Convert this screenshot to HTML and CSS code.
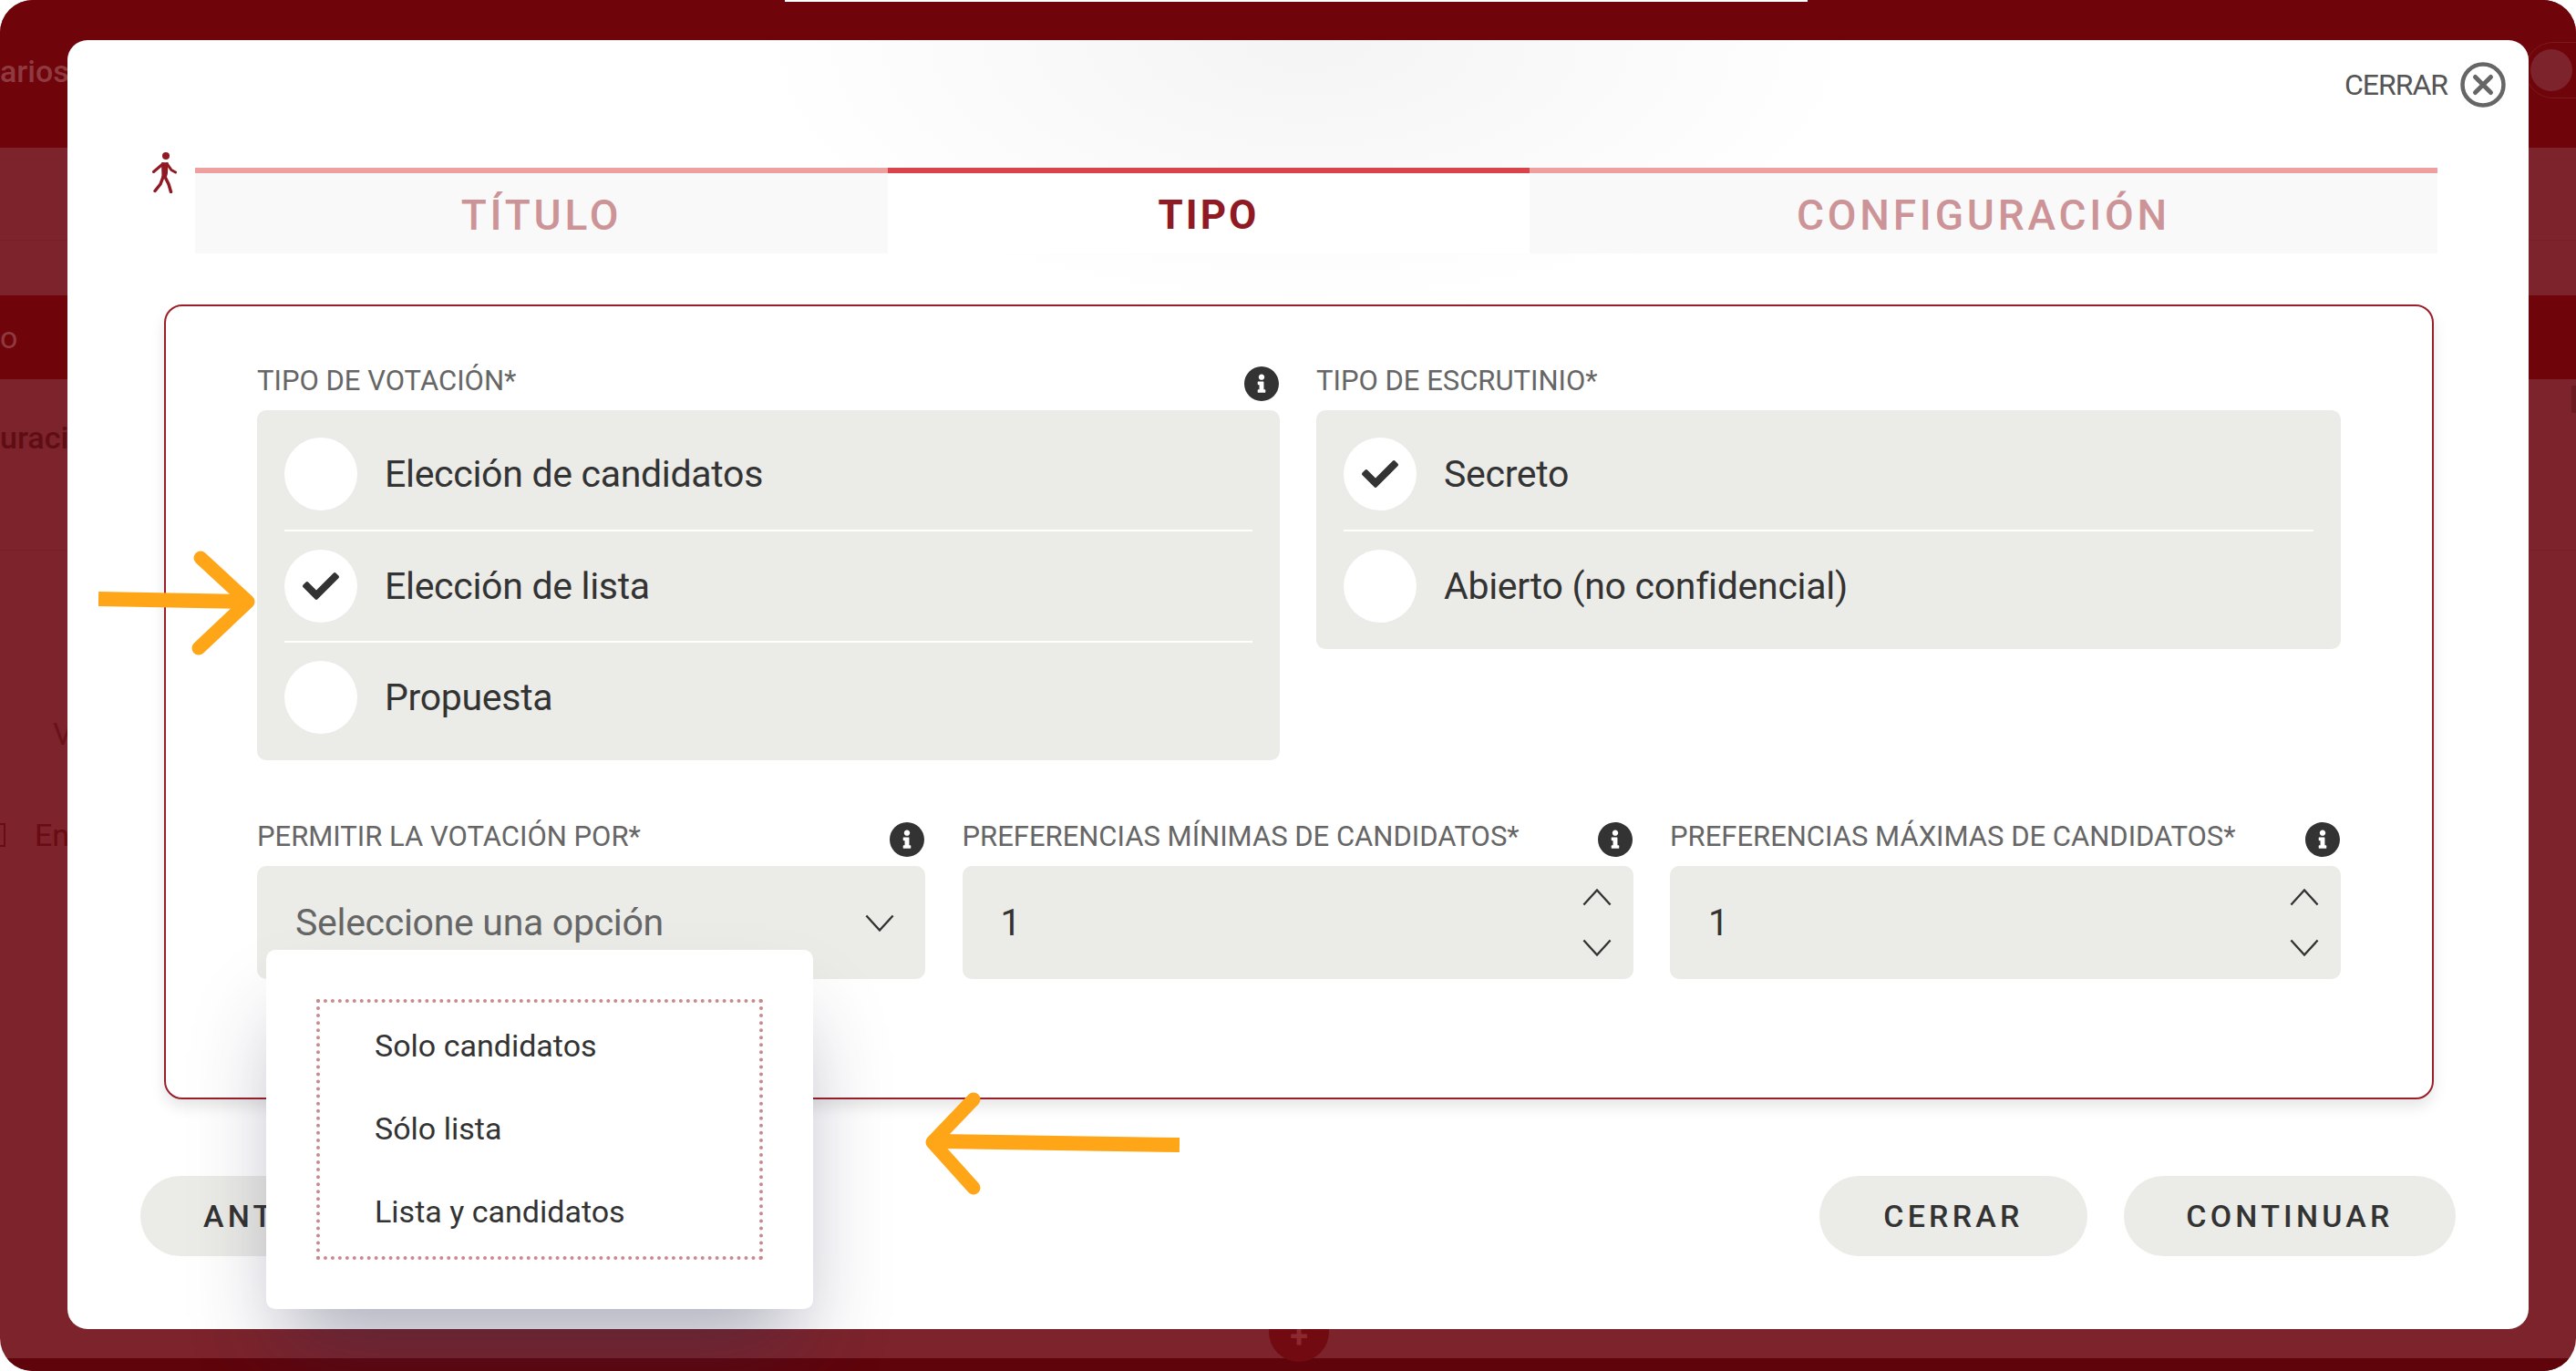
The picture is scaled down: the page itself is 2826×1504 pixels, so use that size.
FILE: index.html
```html
<!DOCTYPE html>
<html lang="es">
<head>
<meta charset="utf-8">
<title>Votación</title>
<link rel="stylesheet" href="styles.css">
</head>
<body>
<div class="screen">
  <div class="backdrop">
    <div class="bd-band bd-head"><span>arios</span></div>
    <div class="bd-band bd-a"></div>
    <div class="bd-band bd-b"></div>
    <div class="bd-band bd-active"><span>o</span></div>
    <div class="bd-band bd-c"><span>uraci</span></div>
    <div class="bd-band bd-d"></div>
    <div class="bd-band bd-e"><span class="bd-v">V</span></div>
    <div class="bd-band bd-f"><span class="bd-icon"></span><span class="bd-en">En</span></div>
    <div class="bd-band bd-g"></div>
    <div class="bd-foot"></div>
  </div>
  <div class="top-sliver"></div>
  <div class="bd-toggle"><span class="bd-knob"></span></div>
  <div class="bd-marker"></div>
  <div class="bd-plus">+</div>

  <section class="modal">
    <header class="close-row">
      <span class="close-text">CERRAR</span>
      <svg class="close-icon" viewBox="0 0 50 50"><circle cx="25" cy="25" r="22.5" fill="none" stroke="#666" stroke-width="4.5"/><path d="M16.5 16.5 33.5 33.5M33.5 16.5 16.5 33.5" fill="none" stroke="#666" stroke-width="5" stroke-linecap="round"/></svg>
    </header>

    <nav class="tabs">
      <svg class="walker" viewBox="0 0 30 46"><circle cx="18" cy="5" r="4" fill="#8f1a24"/><path fill="#8f1a24" d="M13 12.500 20.500 12 20 24 18.500 30 13.500 29Z"/><path d="M15 13.500 4.500 22.500M19.500 14 24 20.500 28.500 23" fill="none" stroke="#8f1a24" stroke-width="3" stroke-linecap="round" stroke-linejoin="round"/><path d="M15 28 12 36 6 43.500M17 28 21 36 23.500 44.500" fill="none" stroke="#8f1a24" stroke-width="3.500" stroke-linecap="round" stroke-linejoin="round"/></svg>
      <div class="tab">TÍTULO</div>
      <div class="tab tab-active">TIPO</div>
      <div class="tab">CONFIGURACIÓN</div>
    </nav>

    <main class="panel">
      <div class="top-grid">
        <div class="field">
          <div class="label-row"><span class="label">TIPO DE VOTACIÓN*</span>
            <svg class="info" viewBox="8 8 496 496"><path d="M256 8C119.043 8 8 119.083 8 256c0 136.997 111.043 248 248 248s248-111.003 248-248C504 119.083 392.957 8 256 8zm0 110c23.196 0 42 18.804 42 42s-18.804 42-42 42-42-18.804-42-42 18.804-42 42-42zm56 254c0 6.627-5.373 12-12 12h-88c-6.627 0-12-5.373-12-12v-24c0-6.627 5.373-12 12-12h12v-64h-12c-6.627 0-12-5.373-12-12v-24c0-6.627 5.373-12 12-12h64c6.627 0 12 5.373 12 12v100h12c6.627 0 12 5.373 12 12v24z"/></svg>
          </div>
          <div class="options">
            <div class="option"><span class="radio"></span><span class="option-text">Elección de candidatos</span></div>
            <div class="option"><span class="radio"><svg class="check" viewBox="0 0 512 512"><path d="M173.898 439.404l-166.4-166.4c-9.997-9.997-9.997-26.206 0-36.204l36.203-36.204c9.997-9.998 26.207-9.998 36.204 0L192 312.690 432.095 72.596c9.997-9.997 26.207-9.997 36.204 0l36.203 36.204c9.997 9.997 9.997 26.206 0 36.204l-294.400 294.401c-9.998 9.997-26.207 9.997-36.204-.001z"/></svg></span><span class="option-text">Elección de lista</span></div>
            <div class="option"><span class="radio"></span><span class="option-text">Propuesta</span></div>
          </div>
        </div>
        <div class="field">
          <div class="label-row"><span class="label">TIPO DE ESCRUTINIO*</span></div>
          <div class="options">
            <div class="option"><span class="radio"><svg class="check" viewBox="0 0 512 512"><path d="M173.898 439.404l-166.4-166.4c-9.997-9.997-9.997-26.206 0-36.204l36.203-36.204c9.997-9.998 26.207-9.998 36.204 0L192 312.690 432.095 72.596c9.997-9.997 26.207-9.997 36.204 0l36.203 36.204c9.997 9.997 9.997 26.206 0 36.204l-294.400 294.401c-9.998 9.997-26.207 9.997-36.204-.001z"/></svg></span><span class="option-text">Secreto</span></div>
            <div class="option"><span class="radio"></span><span class="option-text">Abierto (no confidencial)</span></div>
          </div>
        </div>
      </div>

      <div class="bottom-grid">
        <div class="field">
          <div class="label-row"><span class="label">PERMITIR LA VOTACIÓN POR*</span>
            <svg class="info" viewBox="8 8 496 496"><path d="M256 8C119.043 8 8 119.083 8 256c0 136.997 111.043 248 248 248s248-111.003 248-248C504 119.083 392.957 8 256 8zm0 110c23.196 0 42 18.804 42 42s-18.804 42-42 42-42-18.804-42-42 18.804-42 42-42zm56 254c0 6.627-5.373 12-12 12h-88c-6.627 0-12-5.373-12-12v-24c0-6.627 5.373-12 12-12h12v-64h-12c-6.627 0-12-5.373-12-12v-24c0-6.627 5.373-12 12-12h64c6.627 0 12 5.373 12 12v100h12c6.627 0 12 5.373 12 12v24z"/></svg>
          </div>
          <div class="control select">
            <span class="placeholder">Seleccione una opción</span>
            <svg class="chev" viewBox="0 0 34 20"><path d="M1.500 1.500 17 18.500 32.500 1.500"/></svg>
            <div class="dropdown">
              <ul class="dropdown-list">
                <li>Solo candidatos</li>
                <li>Sólo lista</li>
                <li>Lista y candidatos</li>
              </ul>
            </div>
          </div>
        </div>
        <div class="field">
          <div class="label-row"><span class="label">PREFERENCIAS MÍNIMAS DE CANDIDATOS*</span>
            <svg class="info" viewBox="8 8 496 496"><path d="M256 8C119.043 8 8 119.083 8 256c0 136.997 111.043 248 248 248s248-111.003 248-248C504 119.083 392.957 8 256 8zm0 110c23.196 0 42 18.804 42 42s-18.804 42-42 42-42-18.804-42-42 18.804-42 42-42zm56 254c0 6.627-5.373 12-12 12h-88c-6.627 0-12-5.373-12-12v-24c0-6.627 5.373-12 12-12h12v-64h-12c-6.627 0-12-5.373-12-12v-24c0-6.627 5.373-12 12-12h64c6.627 0 12 5.373 12 12v100h12c6.627 0 12 5.373 12 12v24z"/></svg>
          </div>
          <div class="control number">
            <span class="value">1</span>
            <span class="spin">
              <svg class="chev" viewBox="0 0 34 20"><path d="M1.500 18.500 17 1.500 32.500 18.500"/></svg>
              <svg class="chev" viewBox="0 0 34 20"><path d="M1.500 1.500 17 18.500 32.500 1.500"/></svg>
            </span>
          </div>
        </div>
        <div class="field">
          <div class="label-row"><span class="label">PREFERENCIAS MÁXIMAS DE CANDIDATOS*</span>
            <svg class="info" viewBox="8 8 496 496"><path d="M256 8C119.043 8 8 119.083 8 256c0 136.997 111.043 248 248 248s248-111.003 248-248C504 119.083 392.957 8 256 8zm0 110c23.196 0 42 18.804 42 42s-18.804 42-42 42-42-18.804-42-42 18.804-42 42-42zm56 254c0 6.627-5.373 12-12 12h-88c-6.627 0-12-5.373-12-12v-24c0-6.627 5.373-12 12-12h12v-64h-12c-6.627 0-12-5.373-12-12v-24c0-6.627 5.373-12 12-12h64c6.627 0 12 5.373 12 12v100h12c6.627 0 12 5.373 12 12v24z"/></svg>
          </div>
          <div class="control number">
            <span class="value">1</span>
            <span class="spin">
              <svg class="chev" viewBox="0 0 34 20"><path d="M1.500 18.500 17 1.500 32.500 18.500"/></svg>
              <svg class="chev" viewBox="0 0 34 20"><path d="M1.500 1.500 17 18.500 32.500 1.500"/></svg>
            </span>
          </div>
        </div>
      </div>
    </main>

    <footer class="actions">
      <button class="btn btn-prev">ANTERIOR</button>
      <div class="actions-right">
        <button class="btn btn-close">CERRAR</button>
        <button class="btn btn-next">CONTINUAR</button>
      </div>
    </footer>
  </section>

  <svg class="arrow arrow-right" viewBox="0 0 190 124"><path d="M0 53 L160 56" stroke-width="16" stroke-linecap="butt"/><path d="M112 8 164 56 110 107" stroke-width="15"/></svg>
  <svg class="arrow arrow-left" viewBox="0 0 282 124"><path d="M20 57 L282 61" stroke-width="16" stroke-linecap="butt"/><path d="M56 11 11 58 56 108" stroke-width="15"/></svg>
</div>
</body>
</html>
```

FILE: styles.css
```css
* { box-sizing: border-box; }
html, body { margin: 0; padding: 0; background: #fff; }
body { width: 2826px; height: 1504px; overflow: hidden; font-family: Roboto, "Liberation Sans", sans-serif; }

.screen { position: relative; width: 2826px; height: 1504px; border-radius: 36px; overflow: hidden; background: #7c232b; }

/* dimmed page behind the modal */
.backdrop { position: absolute; inset: 0; display: flex; flex-direction: column; color: #8f3a40; font-size: 34px; }
.bd-band { display: flex; align-items: center; white-space: nowrap; overflow: hidden; flex: none; }
.bd-head { height: 162px; background: #6f040b; align-items: flex-start; padding-top: 58px; font-weight: 500; }
.bd-a { height: 102px; border-bottom: 1px solid #742028; }
.bd-b { height: 60px; }
.bd-active { height: 92px; background: #6f040b; }
.bd-c { height: 128px; color: #5f0d14; font-weight: 500; }
.bd-d { height: 152px; margin-top: 59px; border-top: 1px solid #761f27; }
.bd-e { height: 100px; color: #6b1219; padding-left: 58px; }
.bd-f { height: 122px; color: #6a0a11; gap: 32px; }
.bd-g { flex: 1; }
.bd-foot { height: 14px; flex: none; background: #5f040b; }
.bd-icon { width: 6px; height: 26px; border: 2px solid #6a0a11; border-left: 0; flex: none; }

.top-sliver { position: absolute; left: 861px; top: 0; width: 1122px; height: 2px; background: #fff; }
.bd-toggle { position: absolute; left: 2770px; top: 46px; width: 90px; height: 62px; border-radius: 31px; border: 1px solid #7a1a22; display: flex; align-items: center; padding-left: 5px; }
.bd-knob { width: 46px; height: 46px; border-radius: 50%; background: #7c232b; }
.bd-marker { position: absolute; left: 2821px; top: 423px; width: 5px; height: 30px; background: #6a1a20; }
.bd-plus { position: absolute; left: 1392px; top: 1428px; width: 66px; height: 66px; border-radius: 50%; background: #720a12; color: #8a2a30; font-size: 36px; font-weight: 700; line-height: 76px; text-align: center; }

/* modal */
.modal { position: absolute; left: 74px; top: 44px; width: 2700px; height: 1414px; border-radius: 22px; display: flex; flex-direction: column;
  background: radial-gradient(ellipse 620px 300px at 1360px 0, #f4f4f5 0%, #fafafa 55%, #fff 100%), #fff; }

.close-row { height: 140px; flex: none; display: flex; justify-content: flex-end; align-items: flex-start; gap: 14px; padding: 24px 25px 0 0; }
.close-text { font-size: 32px; line-height: 50px; color: #555; letter-spacing: -1px; }
.close-icon { width: 50px; height: 50px; }

.tabs { position: relative; flex: none; height: 94px; margin-left: 140px; width: 2460px; display: grid; grid-template-columns: 760px 704px 996px; }
.walker { position: absolute; left: -50px; top: -18px; width: 30px; height: 46px; }
.tab { border-top: 6px solid #ee9f9f; background: #f9f9f9; color: #cd9498; font-size: 46px; font-weight: 500; letter-spacing: 3.800px; display: flex; align-items: center; justify-content: center; padding-top: 4px; }
.tab-active { border-top-color: #d9434a; background: #fff; color: #8f1a24; font-weight: 700; font-size: 44px; letter-spacing: 3px; }

.panel { flex: none; margin: 56px 0 0 106px; width: 2490px; height: 872px; border: 2px solid #9a1f2a; border-radius: 20px; background: #fff; box-shadow: 0 8px 16px rgba(0,0,0,.1); padding: 64px 100px 0; }
.top-grid { display: grid; grid-template-columns: 1122px 1124px; column-gap: 40px; align-items: start; }
.bottom-grid { display: grid; grid-template-columns: 733px 736px 736px; column-gap: 40.500px; margin-top: 66px; }
.field { display: flex; flex-direction: column; }
.label-row { height: 50px; display: flex; justify-content: space-between; align-items: flex-start; }
.label { font-size: 31px; line-height: 36px; color: #666; white-space: nowrap; }
.info { width: 38px; height: 38px; margin: 2px 1px 0 0; fill: #333; }

.options { background: #ebebe7; border-radius: 10px; padding: 9px 30px; }
.option { height: 122px; display: flex; align-items: center; gap: 30px; }
.option + .option { border-top: 2px solid #fff; }
.radio { width: 80px; height: 80px; border-radius: 50%; background: #fff; display: flex; align-items: center; justify-content: center; flex: none; }
.check { width: 40px; height: 40px; fill: #333; }
.option-text { font-size: 41px; color: #333; letter-spacing: -.3px; }

.control { position: relative; height: 124px; background: #ebebe7; border-radius: 10px; display: flex; align-items: center; justify-content: space-between; }
.select { padding: 0 34px 0 42px; }
.number { padding: 0 24px 0 42px; }
.placeholder { font-size: 41px; color: #666; letter-spacing: -.3px; }
.value { font-size: 40px; color: #333; }
.chev { width: 32px; height: 19px; fill: none; stroke: #333; stroke-width: 2.500; display: block; }
.spin { display: flex; flex-direction: column; gap: 36px; }

.dropdown { position: absolute; left: 10px; top: 92px; width: 600px; height: 394px; background: #fff; border-radius: 10px; padding: 54px 55px; box-shadow: 0 60px 90px -20px rgba(45,45,80,.38); z-index: 5; }
.dropdown-list { list-style: none; margin: 0; height: 286px; border: 4px dotted #c98a8f; padding: 12px 0 0 60px; }
.dropdown-list li { height: 91px; font-size: 34px; line-height: 70px; color: #333; }

.actions { flex: none; margin: 84px 80px 0; display: flex; justify-content: space-between; }
.actions-right { display: flex; gap: 40px; }
.btn { height: 88px; border: 0; border-radius: 44px; background: #ebebe7; color: #333; font: 500 34px Roboto, sans-serif; letter-spacing: 4.200px; }
.btn-prev { width: 400px; padding-left: 69px; text-align: left; }
.btn-close { width: 294px; }
.btn-next { width: 364px; }

.arrow { position: absolute; fill: none; stroke: #ffa618; stroke-linecap: round; stroke-linejoin: round; z-index: 10; }
.arrow-right { left: 108px; top: 604px; width: 190px; height: 124px; }
.arrow-left { left: 1012px; top: 1195px; width: 282px; height: 124px; }
```
